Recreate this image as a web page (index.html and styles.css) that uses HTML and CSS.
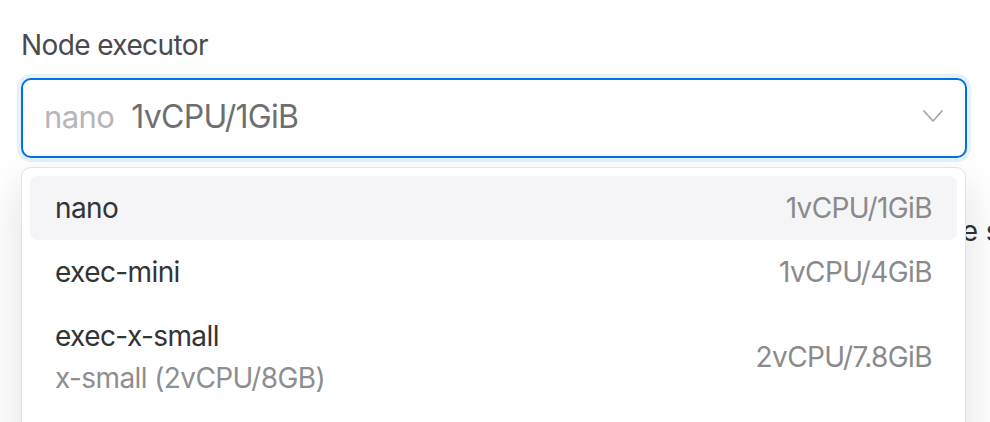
FILE: index.html
```html
<!DOCTYPE html>
<html lang="en">
<head>
<meta charset="utf-8">
<title>Node executor</title>
<link rel="stylesheet" href="styles.css">
</head>
<body>
<div class="field">
  <label class="label">Node executor</label>
  <div class="select-wrap">
    <div class="select">
      <div class="select-value">
        <span class="select-name">nano</span>
        <span class="select-spec">1vCPU/1GiB</span>
      </div>
      <svg class="chevron" width="20" height="12" viewBox="0 0 20 12" aria-hidden="true">
        <polyline points="1,1 10,11 19,1" fill="none" stroke="#a4a4a8" stroke-width="1.7" stroke-linecap="round" stroke-linejoin="round"/>
      </svg>
    </div>
    <div class="menu">
      <div class="item active">
        <div class="item-main"><div class="item-name">nano</div></div>
        <div class="item-spec">1vCPU/1GiB</div>
      </div>
      <div class="item">
        <div class="item-main"><div class="item-name">exec-mini</div></div>
        <div class="item-spec">1vCPU/4GiB</div>
      </div>
      <div class="item tall">
        <div class="item-main">
          <div class="item-name">exec-x-small</div>
          <div class="item-sub">x-small (2vCPU/8GB)</div>
        </div>
        <div class="item-spec">2vCPU/7.8GiB</div>
      </div>
      <div class="item">
        <div class="item-main"><div class="item-name">exec-small</div></div>
        <div class="item-spec">2vCPU/16GiB</div>
      </div>
    </div>
  </div>
  <p class="hint">Executors define the compute resources available to the s</p>
</div>
</body>
</html>
```

FILE: styles.css
```css
html {
  overflow: hidden;
  background: #ffffff;
}

body {
  margin: 0;
  padding: 0;
  min-height: 100vh;
  font-family: Inter, "Liberation Sans", Arial, sans-serif;
  font-size: 28px;
  line-height: 32px;
  letter-spacing: -0.6px;
  color: #333336;
}

.field {
  padding: 29px 23px 0 21px;
}

.label {
  display: block;
  color: #4a4a4e;
  line-height: 32px;
  margin-bottom: 17px;
}

.select-wrap {
  position: relative;
}

.select {
  box-sizing: border-box;
  height: 80px;
  border: 2px solid #0071e3;
  border-radius: 10px;
  box-shadow: 0 0 0 4px rgba(0, 113, 227, 0.1);
  display: flex;
  align-items: center;
  justify-content: space-between;
  padding: 0 22px 2px 21px;
  background: #ffffff;
}

.select-value {
  display: flex;
  align-items: baseline;
  gap: 17px;
}

.select-name {
  font-size: 31px;
  letter-spacing: -0.6px;
  color: #b6b6b8;
}

.select-spec {
  font-size: 32px;
  letter-spacing: -0.7px;
  color: #6e6e70;
}

.chevron {
  display: block;
  margin-top: -3px;
}

.menu {
  position: absolute;
  top: 89px;
  left: 0;
  right: 1px;
  z-index: 2;
  background: #ffffff;
  border: 1px solid #e3e3e5;
  border-radius: 10px;
  padding: 8px;
  box-shadow: 0 16px 44px rgba(0, 0, 0, 0.13);
}

.item {
  display: flex;
  align-items: center;
  justify-content: space-between;
  padding: 16px 25px;
  border-radius: 8px;
}

.item.active {
  background: #f5f5f7;
}

.item-name {
  color: #333336;
}

.item-sub {
  color: #8e8e90;
  margin-top: 10px;
}

.item-spec {
  color: #8a8a8c;
}

.hint {
  margin: 57px -33px 0 0;
  text-align: right;
  white-space: nowrap;
  word-spacing: 1px;
  color: #333336;
  line-height: 32px;
}
```
